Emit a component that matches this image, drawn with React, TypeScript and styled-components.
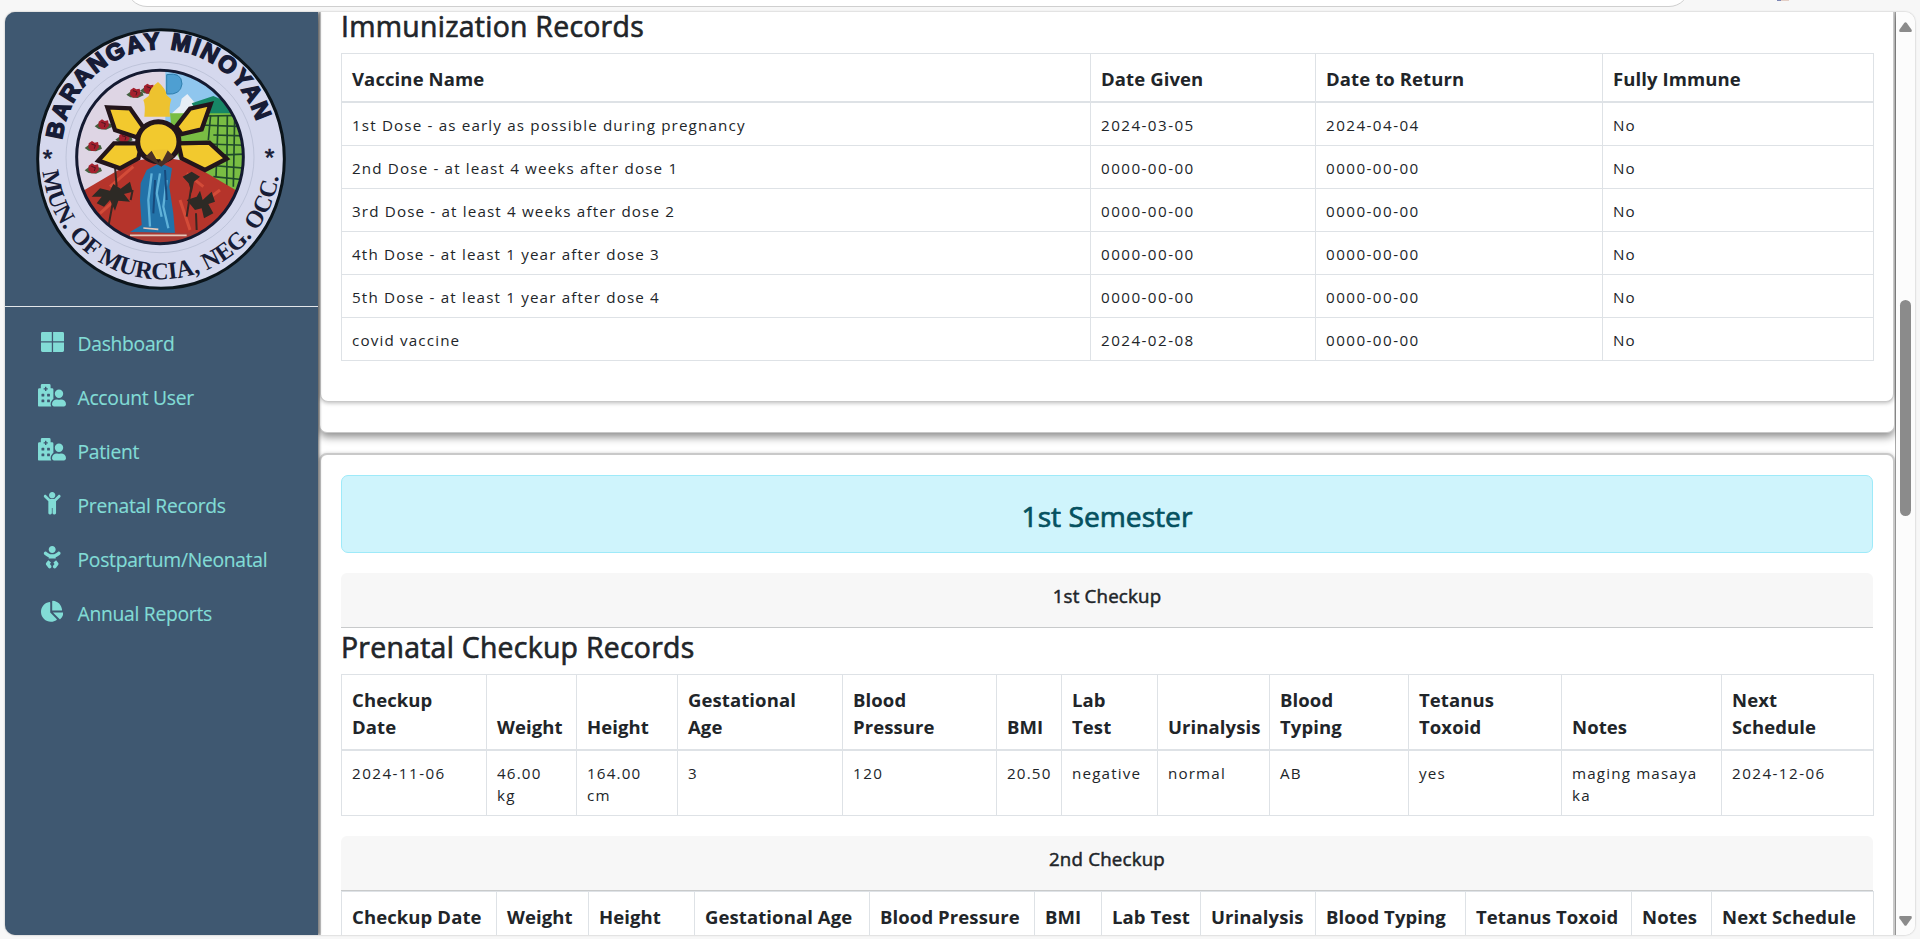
import React from 'react';
import styled, { createGlobalStyle } from 'styled-components';
import { FaBaby, FaChartPie, FaChild, FaHospitalUser } from 'react-icons/fa';

const GlobalStyle = createGlobalStyle`
  * { box-sizing: border-box; }
  html, body { margin: 0; background: #f7f7f7; overflow: hidden; }
  body { font-family: 'Open Sans', 'Noto Sans', sans-serif; color: #212529; font-size: 18px; }
`;

const Screen = styled.div`
  height: 939px;
  width: 1920px;
  display: flex;
  flex-direction: column;
  overflow: hidden;
`;
const BrowserBar = styled.div`
  height: 12px;
  flex: none;
  display: flex;
  align-items: flex-start;
  overflow: hidden;
`;
const AddressField = styled.div`
  width: 1564px;
  flex: none;
  height: 42px;
  margin: -35px 0 0 126px;
  border: 1px solid #cfcfcf;
  border-radius: 21px;
  background: #fff;
`;
const ExtensionMark = styled.i`
  width: 12px;
  height: 1px;
  flex: none;
  margin-left: 87px;
  background: linear-gradient(90deg, #7d86b4 0 35%, #e4cfc6 35%);
`;
const Viewport = styled.div`
  height: 923px;
  width: 1910px;
  margin-left: 5px;
  display: flex;
  overflow: hidden;
  border-radius: 10px;
  background: #fff;
  box-shadow: 0 0 2px rgba(0, 0, 0, 0.3);
`;
const Sidebar = styled.nav`
  width: 313px;
  flex: none;
  background: #3f5871;
  color: #82dcd6;
  position: relative;
  z-index: 2;
  box-shadow: 1px 0 3px rgba(0, 0, 0, 0.65);
`;
const SealBox = styled.div`
  height: 295px;
  padding: 16px 0 0 31px;
  border-bottom: 1px solid #e3e6ea;
`;
const Menu = styled.ul`
  list-style: none;
  margin: 0;
  padding: 9px 0 0 31px;
`;
const MenuItem = styled.li`
  height: 54px;
  display: flex;
  align-items: center;
  font-size: 19.3px;
`;
const MenuIcon = styled.span`
  width: 32px;
  display: flex;
  justify-content: center;
  margin-right: 9.5px;
  margin-top: -3px;
  font-size: 22.4px;
`;
const HospitalIcon = styled(FaHospitalUser)`
  width: 28px;
`;
const MenuLabel = styled.span`
  letter-spacing: -0.28px;
  -webkit-text-stroke: 0.15px currentColor;
`;

const Content = styled.main`
  flex: 1;
  min-width: 0;
  padding: 0 0 0 1px;
  border-right: 1px solid #a8a8a8;
  background: #fff;
`;
const Wrapper = styled.section`
  height: 421px;
  border-radius: 0 0 8px 8px;
  background: #fff;
  border: 1px solid #c8c8c8;
  border-top: 0;
  box-shadow: 0 4px 8px rgba(0, 0, 0, 0.45);
`;
const Card = styled.section<{ $tall?: boolean }>`
  height: ${(p) => (p.$tall ? 520 : 390)}px;
  margin-top: ${(p) => (p.$tall ? 20 : 0)}px;
  padding: ${(p) => (p.$tall ? '20px 20px 0' : '0 20px')};
  border: ${(p) => (p.$tall ? '2px' : '1px')} solid #c9c9c9;
  border-top-width: ${(p) => (p.$tall ? 2 : 0)}px;
  border-radius: ${(p) => (p.$tall ? '8px 8px 0 0' : '0 0 8px 8px')};
  background: #fff;
  box-shadow: 0 1px 4px rgba(0, 0, 0, 0.28);
`;
const Title = styled.h3<{ $top?: boolean }>`
  margin: 0;
  height: ${(p) => (p.$top ? 41 : 46)}px;
  line-height: ${(p) => (p.$top ? 29 : 39)}px;
  font-size: 28.4px;
  font-weight: 500;
  letter-spacing: 0.28px;
  white-space: nowrap;
  -webkit-text-stroke: 0.65px currentColor;
`;
const Grid = styled.table`
  width: 1532px;
  table-layout: fixed;
  border-collapse: collapse;
`;
const HeadCell = styled.th`
  border: 1px solid #dee2e6;
  border-bottom: 2px solid #dee2e6;
  padding: 11px 0 9px 10px;
  line-height: 27px;
  font-size: 18.5px;
  font-weight: 700;
  letter-spacing: 0.1px;
  text-align: left;
  vertical-align: bottom;
  white-space: pre;
`;
const Cell = styled.td<{ $numeric: boolean }>`
  border: 1px solid #dee2e6;
  padding: 11px 0 9px 10px;
  line-height: 22px;
  font-size: 15.2px;
  letter-spacing: ${(p) => (p.$numeric ? 1.45 : 1.15)}px;
  vertical-align: top;
  white-space: pre;
`;
const Banner = styled.div`
  height: 78px;
  display: flex;
  align-items: center;
  justify-content: center;
  padding-top: 4px;
  border: 1px solid #9eeaf9;
  border-radius: 7px;
  background: #cff4fc;
  color: #055160;
  font-size: 28.2px;
  font-weight: 500;
  -webkit-text-stroke: 0.7px currentColor;
`;
const CheckupBar = styled.div`
  height: 55px;
  margin-top: 20px;
  padding-top: 9px;
  border-bottom: 1px solid #c8cacb;
  border-radius: 6px 6px 0 0;
  background: #f7f7f7;
  text-align: center;
  font-size: 18.7px;
  font-weight: 500;
  line-height: 28px;
  letter-spacing: 0.2px;
  -webkit-text-stroke: 0.5px currentColor;
`;
const ScrollTrack = styled.div`
  width: 19px;
  flex: none;
  display: flex;
  flex-direction: column;
  align-items: center;
  background: #fcfcfc;
  padding-top: 10px;
`;
const ScrollThumb = styled.div`
  width: 11px;
  height: 216px;
  margin: 268px 0 400px;
  border-radius: 6px;
  background: #8b8b8b;
`;

const Arrow = ({ down }: { down?: boolean }) => (
  <svg width="13" height="10" viewBox="0 0 13 10" fill="#8b8b8b">
    <path
      d="M5.2 1Q6.5-.7 7.8 1L12.6 7.8Q13.4 10 11.5 10H1.5Q-.4 10 .4 7.8Z"
      transform={down ? 'rotate(180 6.5 5)' : undefined}
    />
  </svg>
);

const DashboardIcon = () => (
  <svg width="23" height="20" viewBox="0 0 23 20" fill="currentColor">
    <path d="M1.4 0H10.8V9.2H0V1.4Q0 0 1.4 0ZM12.1 0H21.6Q23 0 23 1.4V9.2H12.1ZM0 10.6H10.8V20H1.4Q0 20 0 18.6ZM12.1 10.6H23V18.6Q23 20 21.6 20H12.1Z" />
  </svg>
);

const Rose = ({ x, y }: { x: number; y: number }) => (
  <g transform={`translate(${x} ${y})`}>
    <path d="M-26 4L-10-8L22-4L26 6L8 14L-14 12Z" fill="#45603f" />
    <path d="M-14-10L-4-17L4-12L14-14L17 2L8 12L-6 13L-15 4Z" fill="#a3202d" />
    <path d="M-6-8L6-4L3 6" fill="none" stroke="#4e1723" strokeWidth="3" />
  </g>
);

const Seal = () => (
  <svg width="250" height="262" viewBox="108 84 750 786">
    <defs>
      <path id="upperArc" d="M186 420A300 312 0 0 1 778 399" />
      <path id="lowerArc" d="M128 515A357 361 0 0 0 836.8 525" />
      <clipPath id="disc">
        <ellipse cx="480" cy="471" rx="250" ry="260" />
      </clipPath>
    </defs>
    <ellipse cx="483" cy="477" rx="370" ry="388" fill="#d5d8ed" stroke="#0b141a" strokeWidth="9" />
    <ellipse cx="480" cy="472" rx="282" ry="286" fill="none" stroke="#aab2c9" strokeWidth="1.6" />
    <g clipPath="url(#disc)">
      <rect x="220" y="200" width="520" height="540" fill="#ded5e4" />
      <path d="M496 200H740V420H496Z" fill="#8fc6ee" />
      <path d="M500 224Q545 215 546 252Q542 286 500 282Z" fill="#4e9fd2" stroke="#2f7fae" strokeWidth="3" />
      <path d="M510 345L540 318L545 296L562 282L582 305L650 320V350Z" fill="#e7eef6" />
      <path d="M575 310L640 288L740 330V352H600Z" fill="#178766" />
      <path d="M510 340H740V600H600L520 440Z" fill="#79bd43" />
      <g stroke="#1f4a2b" strokeWidth="5" fill="none">
        <path d="M620 348L740 346M600 375L740 380M640 405L740 408M620 432L740 436M640 466L740 462M620 495L740 505M640 530L740 540" />
        <path d="M632 345L625 420M655 345L648 530M682 345L680 575M704 350L700 560" />
      </g>
      <path d="M220 590L400 484L480 470L560 484L740 590V740H220Z" fill="#b5342b" />
      <path d="M330 560L400 500M300 640L390 560M560 520L610 560M540 600L570 690M620 600L660 570" stroke="#d34b38" strokeWidth="9" />
      <g fill="#2d2a25">
        <path d="M275 590L300 565L330 572L340 552L362 566L390 545L398 575L372 582L390 605L355 602L345 632L330 600L312 620L290 610L305 590Z" />
        <path d="M548 530L575 515L600 530L582 545L575 580L566 550ZM560 600L590 590L600 572L608 600L635 575L645 605L625 612L640 640L612 655L605 625L585 630Z" />
      </g>
      <path d="M345 500L350 560M340 600L325 680M398 570L392 600M574 560L560 650M588 640L590 690" stroke="#392722" strokeWidth="6" fill="none" />
      <path d="M440 510L480 488L516 505L508 560L520 640L525 700L390 696L425 675L420 600L422 550Z" fill="#2272a8" />
      <path d="M455 520L445 600L450 680M480 520L470 580L485 650M500 540L490 620L505 685" stroke="#5fb2d9" strokeWidth="7" fill="none" />
      <path d="M465 540L460 640M495 510L500 600" stroke="#174a7d" strokeWidth="6" fill="none" />
      <path d="M350 697L560 699L590 690L560 740H380Z" fill="#a83a34" />
      <path d="M390 706H560M430 684L475 688" stroke="#e3c8ba" strokeWidth="5" />
      <Rose x={405} y={280} />
      <Rose x={446} y={268} />
      <Rose x={310} y={375} />
      <Rose x={280} y={440} />
      <Rose x={280} y={507} />
      <Rose x={372} y={415} />
      <g fill="#f2c92e" stroke="#23151b" strokeWidth="13">
        <path d="M322 322L390 325L432 385L410 412L345 390Z" />
        <path d="M632 312L570 326L528 380L545 402L605 388Z" />
        <path d="M295 482L342 430L425 430L415 475L360 505Z" />
        <path d="M680 476L628 428L535 430L545 475L615 510Z" />
      </g>
      <path d="M433 350Q437 315 430 300L446 288Q448 265 474 246Q498 266 500 286L514 298Q506 320 510 350Z" fill="#edc22f" />
      <ellipse cx="475" cy="425" rx="62" ry="60" fill="#f2c92e" stroke="#23151b" strokeWidth="15" />
      <path d="M436 470L455 452L475 488L502 450L522 470L484 500Z" fill="#493027" />
      <path d="M455 450L486 484L505 448Z" fill="#edc22f" />
    </g>
    <ellipse cx="480" cy="471" rx="250" ry="260" fill="none" stroke="#141a31" strokeWidth="9" />
    <g fill="#171c36">
      <text fontFamily="'Liberation Sans', sans-serif" fontWeight="700" fontSize="71" stroke="#171c36" strokeWidth="4.5">
        <textPath href="#upperArc" textLength="826" lengthAdjust="spacing">BARANGAY MINOYAN</textPath>
      </text>
      <text fontFamily="'Liberation Serif', serif" fontWeight="700" fontSize="73">
        <textPath href="#lowerArc" textLength="1036" lengthAdjust="spacingAndGlyphs">MUN. OF MURCIA, NEG. OCC.</textPath>
      </text>
      <text x="128" y="500" fontFamily="'Liberation Sans', sans-serif" fontSize="74" stroke="#171c36" strokeWidth="2">*</text>
      <text x="794" y="498" fontFamily="'Liberation Sans', sans-serif" fontSize="74" stroke="#171c36" strokeWidth="2">*</text>
    </g>
  </svg>
);

const menu = [
  { label: 'Dashboard', icon: <DashboardIcon /> },
  { label: 'Account User', icon: <HospitalIcon /> },
  { label: 'Patient', icon: <HospitalIcon /> },
  { label: 'Prenatal Records', icon: <FaChild /> },
  { label: 'Postpartum/Neonatal', icon: <FaBaby /> },
  { label: 'Annual Reports', icon: <FaChartPie /> },
];

type TableProps = { widths: number[]; head: string[]; rows: string[][] };

const RecordTable = ({ widths, head, rows }: TableProps) => (
  <Grid>
    <colgroup>
      {widths.map((w, i) => (
        <col key={i} width={w} />
      ))}
    </colgroup>
    <thead>
      <tr>
        {head.map((h) => (
          <HeadCell key={h}>{h}</HeadCell>
        ))}
      </tr>
    </thead>
    <tbody>
      {rows.map((r, i) => (
        <tr key={i}>
          {r.map((c, j) => (
            <Cell key={j} $numeric={/^[\d-]+$/.test(c)}>
              {c}
            </Cell>
          ))}
        </tr>
      ))}
    </tbody>
  </Grid>
);

const vaccines = [
  ['1st Dose - as early as possible during pregnancy', '2024-03-05', '2024-04-04', 'No'],
  ['2nd Dose - at least 4 weeks after dose 1', '0000-00-00', '0000-00-00', 'No'],
  ['3rd Dose - at least 4 weeks after dose 2', '0000-00-00', '0000-00-00', 'No'],
  ['4th Dose - at least 1 year after dose 3', '0000-00-00', '0000-00-00', 'No'],
  ['5th Dose - at least 1 year after dose 4', '0000-00-00', '0000-00-00', 'No'],
  ['covid vaccine', '2024-02-08', '0000-00-00', 'No'],
];

export default function App() {
  return (
    <Screen>
      <GlobalStyle />
      <BrowserBar>
        <AddressField />
        <ExtensionMark />
      </BrowserBar>
      <Viewport>
        <Sidebar>
          <SealBox>
            <Seal />
          </SealBox>
          <Menu>
            {menu.map((m) => (
              <MenuItem key={m.label}>
                <MenuIcon>{m.icon}</MenuIcon>
                <MenuLabel>{m.label}</MenuLabel>
              </MenuItem>
            ))}
          </Menu>
        </Sidebar>
        <Content>
          <Wrapper>
            <Card>
              <Title $top>Immunization Records</Title>
              <RecordTable
                widths={[749, 225, 287, 271]}
                head={['Vaccine Name', 'Date Given', 'Date to Return', 'Fully Immune']}
                rows={vaccines}
              />
            </Card>
          </Wrapper>
          <Card $tall>
            <Banner>1st Semester</Banner>
            <CheckupBar>1st Checkup</CheckupBar>
            <Title>Prenatal Checkup Records</Title>
            <RecordTable
              widths={[145, 90, 101, 165, 154, 65, 96, 112, 139, 153, 160, 152]}
              head={['Checkup\nDate', 'Weight', 'Height', 'Gestational\nAge', 'Blood\nPressure', 'BMI', 'Lab\nTest', 'Urinalysis', 'Blood\nTyping', 'Tetanus\nToxoid', 'Notes', 'Next\nSchedule']}
              rows={[['2024-11-06', '46.00\nkg', '164.00\ncm', '3', '120', '20.50', 'negative', 'normal', 'AB', 'yes', 'maging masaya\nka', '2024-12-06']]}
            />
            <CheckupBar>2nd Checkup</CheckupBar>
            <RecordTable
              widths={[155, 92, 106, 175, 165, 67, 99, 115, 150, 166, 80, 162]}
              head={['Checkup Date', 'Weight', 'Height', 'Gestational Age', 'Blood Pressure', 'BMI', 'Lab Test', 'Urinalysis', 'Blood Typing', 'Tetanus Toxoid', 'Notes', 'Next Schedule']}
              rows={[]}
            />
          </Card>
        </Content>
        <ScrollTrack>
          <Arrow />
          <ScrollThumb />
          <Arrow down />
        </ScrollTrack>
      </Viewport>
    </Screen>
  );
}
